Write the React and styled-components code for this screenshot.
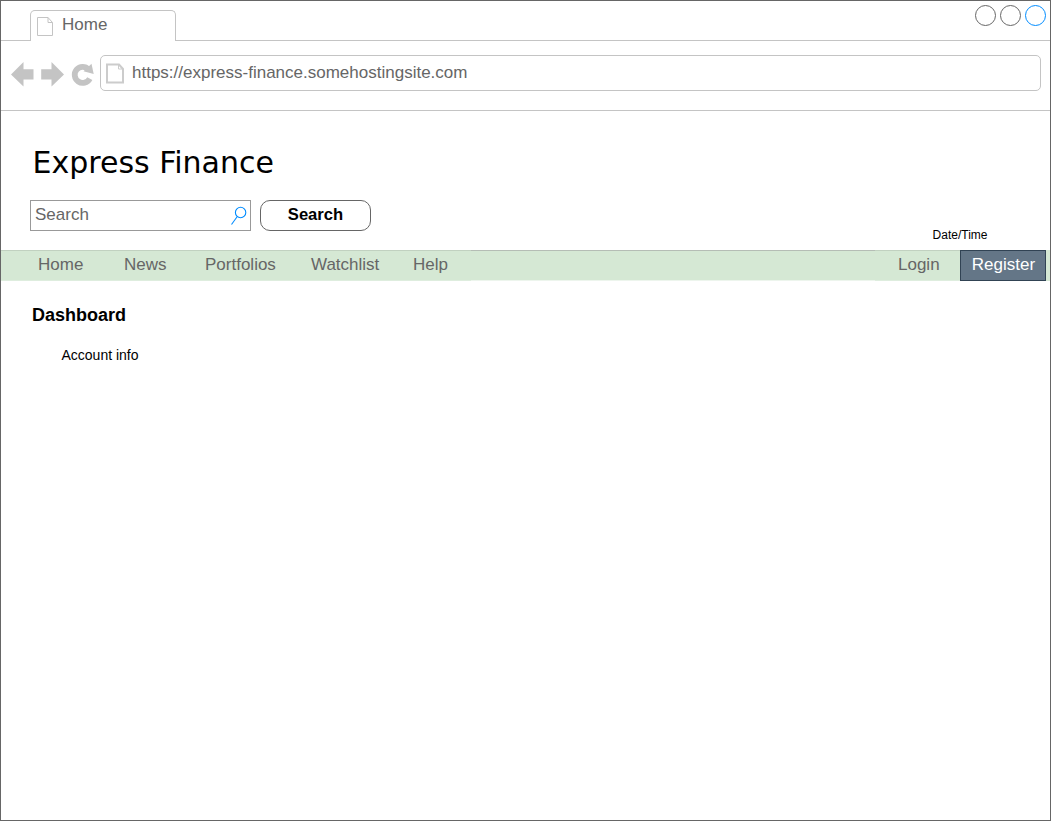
import React from 'react';
import styled, { createGlobalStyle } from 'styled-components';

const Global = createGlobalStyle`
  * { box-sizing: border-box; }
  body { margin: 0; background: #fff; font-family: "Liberation Sans", Arial, sans-serif; }
`;

const Window = styled.div`
  width: 1051px;
  height: 821px;
  border: 1px solid #666;
  background: #fff;
  color: #000;
  overflow: hidden;
`;

const TabBar = styled.header`
  display: flex;
  justify-content: space-between;
  height: 40px;
  padding: 9px 3px 0 29px;
  border-bottom: 1px solid #c4c4c4;
`;

const Tab = styled.div`
  display: flex;
  width: 146px;
  height: 31px;
  padding: 6px 0 0 6px;
  border: 1px solid #c4c4c4;
  border-bottom: 0;
  border-radius: 5px 5px 0 0;
  background: #fff;
`;

const TabTitle = styled.span`
  margin: -2px 0 0 8px;
  color: #666;
  font-size: 17px;
  line-height: 20px;
`;

const WindowButtons = styled.div`
  display: flex;
  gap: 3px;
  margin-top: -6px;
`;

const Circle = styled.svg.attrs({ width: 22, height: 22, viewBox: '0 0 22 22' })`
  fill: #fff;
  stroke: ${(p) => p.$color};
`;

const AddressBar = styled.div`
  display: flex;
  height: 70px;
  padding: 14px 9px 0 9px;
  border-bottom: 1px solid #c4c4c4;
`;

const NavIcons = styled.svg`
  flex: none;
  display: block;
`;

const UrlBox = styled.div`
  display: flex;
  flex: 1;
  height: 36px;
  padding: 7px 0 0 5px;
  border: 1px solid #c4c4c4;
  border-radius: 5px;
`;

const Url = styled.span`
  margin-left: 7px;
  color: #666;
  font-size: 17px;
  line-height: 20px;
`;

const Masthead = styled.section`
  display: flex;
  justify-content: space-between;
  align-items: flex-end;
  height: 139px;
  padding: 0 62.5px 0 29px;
`;

const Title = styled.h1`
  margin: 0 0 19px 2.5px;
  font-family: "DejaVu Sans", Verdana, sans-serif;
  font-size: 30px;
  font-weight: 400;
  line-height: 36px;
  white-space: nowrap;
`;

const SearchRow = styled.div`
  display: flex;
  gap: 9px;
  margin-bottom: 19px;
`;

const SearchField = styled.div`
  display: flex;
  justify-content: space-between;
  width: 221px;
  height: 31px;
  padding: 4px 3px 0 4px;
  border: 1px solid #999;
  color: #666;
  font-size: 17px;
  line-height: 20px;
`;

const SearchButton = styled.button`
  width: 111px;
  height: 31px;
  padding: 0 0 2px;
  border: 1px solid #666;
  border-radius: 10px;
  background: #fff;
  color: #000;
  font: bold 16.6px/20px "Liberation Sans", Arial, sans-serif;
`;

const DateTime = styled.div`
  margin-bottom: 8px;
  font-size: 12px;
  line-height: 14px;
`;

const Menu = styled.nav`
  display: flex;
  height: 31px;
  margin: 0 -1px;
  padding-right: 5px;
  background: #d5e8d4;
`;

const MenuGroup = styled.div`
  display: flex;
  width: ${(p) => p.$width}px;
  padding-left: ${(p) => p.$indent}px;
  border-top: 1px solid #c1d1c0;
  border-bottom: 1px solid #deedde;
`;

const MenuItem = styled.a`
  width: ${(p) => p.$width}px;
  padding-top: 4px;
  color: #666;
  font-size: 17px;
  line-height: 20px;
`;

const Spacer = styled.div`
  flex: 1;
  border-top: 1px solid #b5bdb5;
  border-bottom: 1px solid #edf5ed;
`;

const Register = styled.a`
  width: 86px;
  height: 31px;
  padding: 4px 0 0 1px;
  border: 1px solid #314354;
  background: #647687;
  color: #fff;
  font-size: 17px;
  line-height: 20px;
  text-align: center;
`;

const Content = styled.main`
  padding: 23px 31px;
`;

const Heading = styled.h2`
  margin: 0;
  font-size: 18px;
  line-height: 22px;
`;

const AccountInfo = styled.p`
  margin: 21px 0 0 29.5px;
  font-size: 14px;
  line-height: 16px;
`;

const items = [
  ['Home', 86],
  ['News', 81],
  ['Portfolios', 106],
  ['Watchlist', 102],
  ['Help', 58],
];

export default function App() {
  return (
    <>
      <Global />
      <Window>
        <TabBar>
          <Tab>
            <svg width="17" height="20" viewBox="0 0 17 20" fill="none" stroke="#c4c4c4">
              <path d="M.5.5h10.5l4.5 5v13H.5zM11 .5v5h4.5" />
            </svg>
            <TabTitle>Home</TabTitle>
          </Tab>
          <WindowButtons>
            <Circle $color="#666"><circle cx="10.5" cy="11.5" r="10" /></Circle>
            <Circle $color="#666"><circle cx="10.5" cy="11.5" r="10" /></Circle>
            <Circle $color="#008cff"><circle cx="10.5" cy="11.5" r="10" /></Circle>
          </WindowButtons>
        </TabBar>
        <AddressBar>
          <NavIcons width="90" height="40" viewBox="10 55 90 40" fill="#c4c4c4">
            <path d="M11 74.5 23.5 62v7.3h10v10.200h-10v7zM64 74.500 51.500 62v7.300H41.200v10.200h10.300v7z" />
            <path d="M89.800 78.600A8 8 0 1 1 88.500 69.300" fill="none" stroke="#c4c4c4" strokeWidth="5.800" />
            <path d="M91.500 63.800 93.700 74 83.500 71.300z" />
          </NavIcons>
          <UrlBox>
            <svg width="19" height="22" viewBox="0 0 19 22" fill="none" stroke="#ccc" strokeWidth="2">
              <path d="M1 1.500h12l4 4.500v13.500H1z" />
              <path d="M12.500 1.500V6H17" strokeWidth="1" />
            </svg>
            <Url>https://express-finance.somehostingsite.com</Url>
          </UrlBox>
        </AddressBar>
        <Masthead>
          <div>
            <Title>Express Finance</Title>
            <SearchRow>
              <SearchField>
                Search
                <svg width="17" height="20" viewBox="0 0 17 20" fill="none" stroke="#008cff" strokeWidth="1.100">
                  <circle cx="10.600" cy="7.500" r="5.200" />
                  <path d="M7.300 11.500 1.500 19.500" />
                </svg>
              </SearchField>
              <SearchButton>Search</SearchButton>
            </SearchRow>
          </div>
          <DateTime>Date/Time</DateTime>
        </Masthead>
        <Menu>
          <MenuGroup $width={471} $indent={38}>
            {items.map(([label, width]) => (
              <MenuItem key={label} $width={width}>{label}</MenuItem>
            ))}
          </MenuGroup>
          <Spacer />
          <MenuGroup $width={85} $indent={23}>
            <MenuItem $width={62}>Login</MenuItem>
          </MenuGroup>
          <Register>Register</Register>
        </Menu>
        <Content>
          <Heading>Dashboard</Heading>
          <AccountInfo>Account info</AccountInfo>
        </Content>
      </Window>
    </>
  );
}
